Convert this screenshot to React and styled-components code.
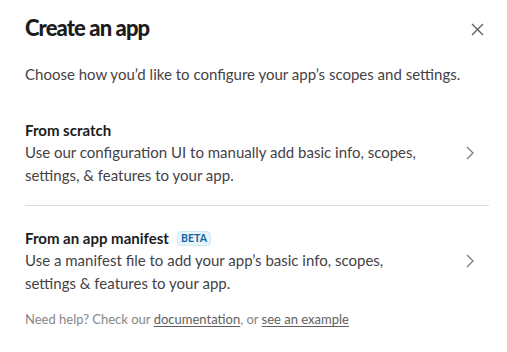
import React from "react";
import styled, { createGlobalStyle } from "styled-components";

const GlobalStyle = createGlobalStyle`
  body {
    margin: 0;
    background: #fff;
    font-family: Lato, "Noto Sans", sans-serif;
    -webkit-font-smoothing: antialiased;
  }
`;

const Modal = styled.div`
  width: 507px;
  height: 352px;
  box-sizing: border-box;
  padding: 12px 18px 0 25px;
  background: #fff;
`;

const Header = styled.div`
  display: flex;
  align-items: center;
  justify-content: space-between;
  height: 30px;
`;

const Title = styled.h1`
  margin: 0;
  font-size: 22px;
  font-weight: 900;
  letter-spacing: -0.9px;
  color: #1d1c1d;
`;

const CloseButton = styled.button`
  border: none;
  background: none;
  padding: 0;
  width: 20px;
  height: 20px;
  margin-right: 2px;
  margin-top: 4px;
  display: flex;
  align-items: center;
  justify-content: center;
  cursor: pointer;
  color: #616061;
`;

const Intro = styled.p`
  margin: 21px 0 0;
  font-size: 15px;
  line-height: 22px;
  color: #454245;
`;

const Options = styled.div`
  margin-top: 34px;
  display: flex;
  flex-direction: column;
`;

const Option = styled.div`
  display: flex;
  align-items: center;
  justify-content: space-between;
  padding: ${({ $first }) => ($first ? "0 0 19px" : "21px 0 0")};
  border-bottom: ${({ $first }) => ($first ? "1px solid #dddddd" : "none")};
  cursor: pointer;
`;

const OptionText = styled.div`
  display: flex;
  flex-direction: column;
  width: 410px;
`;

const OptionTitle = styled.div`
  display: flex;
  align-items: center;
  gap: 8px;
  font-size: 15px;
  font-weight: 700;
  line-height: 22px;
  color: #1d1c1d;
`;

const Badge = styled.span`
  font-size: 10.5px;
  font-weight: 700;
  line-height: 13px;
  letter-spacing: 0.1px;
  color: #1264a3;
  background: #e8f5fa;
  border: 1px solid #cfe9f5;
  border-radius: 4px;
  padding: 0 3px;
`;

const OptionDesc = styled.div`
  font-size: 15px;
  line-height: 22.5px;
  color: #454245;
`;

const Chevron = styled.span`
  display: flex;
  color: #7c7a7f;
  margin-right: 14px;
`;

const Footer = styled.p`
  margin: 16px 0 0;
  font-size: 13px;
  line-height: 18px;
  color: #868686;
`;

const FooterLink = styled.a`
  color: #616061;
  text-decoration: underline;
  text-underline-offset: 2px;
`;

const ChevronIcon = () => (
  <svg width="10" height="16" viewBox="0 0 10 16" fill="none">
    <path d="M2 2l6 6-6 6" stroke="currentColor" strokeWidth="1.3" />
  </svg>
);

const CloseIcon = () => (
  <svg width="13" height="13" viewBox="0 0 13 13" fill="none">
    <path d="M1 1l11 11M12 1L1 12" stroke="currentColor" strokeWidth="1.4" />
  </svg>
);

const App = () => {
  return (
    <>
      <GlobalStyle />
      <Modal>
        <Header>
          <Title>Create an app</Title>
          <CloseButton aria-label="Close">
            <CloseIcon />
          </CloseButton>
        </Header>
        <Intro>Choose how you’d like to configure your app’s scopes and settings.</Intro>
        <Options>
          <Option $first>
            <OptionText>
              <OptionTitle>From scratch</OptionTitle>
              <OptionDesc>
                Use our configuration UI to manually add basic info, scopes, settings, &amp; features to your app.
              </OptionDesc>
            </OptionText>
            <Chevron>
              <ChevronIcon />
            </Chevron>
          </Option>
          <Option>
            <OptionText>
              <OptionTitle>
                From an app manifest <Badge>BETA</Badge>
              </OptionTitle>
              <OptionDesc>
                Use a manifest file to add your app’s basic info, scopes, settings &amp; features to your app.
              </OptionDesc>
            </OptionText>
            <Chevron>
              <ChevronIcon />
            </Chevron>
          </Option>
        </Options>
        <Footer>
          Need help? Check our <FooterLink href="#">documentation</FooterLink>, or{" "}
          <FooterLink href="#">see an example</FooterLink>
        </Footer>
      </Modal>
    </>
  );
};

export default App;
